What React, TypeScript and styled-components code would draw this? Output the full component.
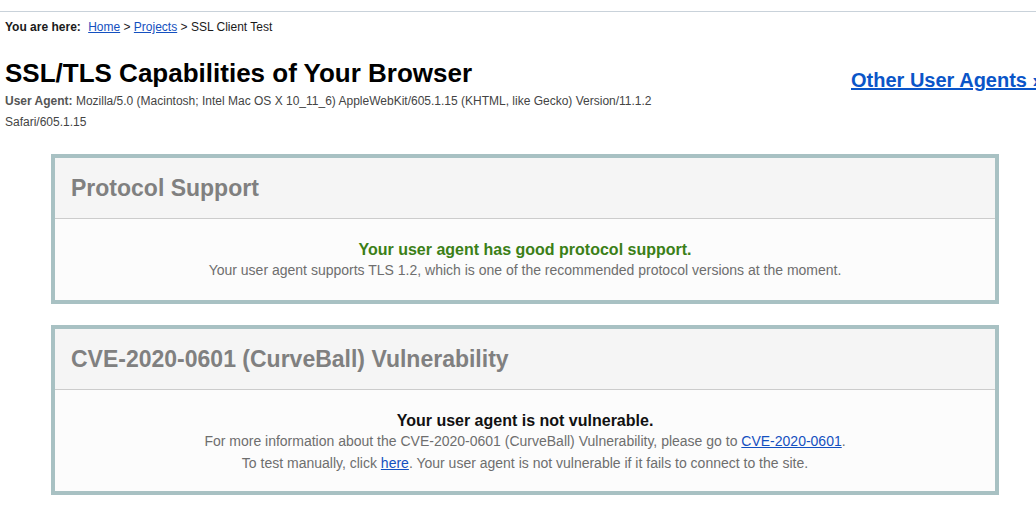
import React from 'react';
import styled, { createGlobalStyle } from 'styled-components';

const GlobalStyle = createGlobalStyle`
  html, body {
    margin: 0;
    padding: 0;
    background: #ffffff;
    overflow: hidden;
  }
  body {
    font-family: "Liberation Sans", Arial, Helvetica, sans-serif;
    color: #111111;
  }
  a {
    color: #1450c0;
  }
`;

const Page = styled.div`
  width: 1080px;
  padding-top: 11px;
`;

const TopRule = styled.div`
  height: 1px;
  background: #c9d2da;
`;

const Breadcrumb = styled.div`
  margin: 7px 0 0 5px;
  font-size: 12px;
  line-height: 16px;
  color: #1a1a1a;

  b {
    margin-right: 4px;
  }
`;

const HeaderRow = styled.div`
  display: flex;
  margin-top: 23px;
`;

const TitleBlock = styled.div`
  width: 851px;
  padding-left: 5px;
  box-sizing: border-box;
`;

const Title = styled.h1`
  margin: 0;
  font-size: 26px;
  line-height: 30px;
  font-weight: bold;
  color: #000000;
`;

const Agent = styled.div`
  width: 670px;
  margin-top: 3px;
  font-size: 12px;
  line-height: 21px;
  color: #444444;

  b {
    color: #555555;
  }
`;

const OtherLink = styled.a`
  padding-top: 10px;
  font-size: 20px;
  line-height: 24px;
  font-weight: bold;
  white-space: nowrap;
  color: #0a55c8;
`;

const Panels = styled.div`
  display: flex;
  flex-direction: column;
  gap: 21px;
  width: 948px;
  margin: 21px 0 0 51px;
`;

const Panel = styled.section`
  border: 4px solid #a8c1c3;
  background: #fcfcfc;
`;

const PanelHead = styled.div`
  height: 60px;
  display: flex;
  align-items: center;
  padding-left: 16px;
  background: #f5f5f5;
  border-bottom: 1px solid #cccccc;
`;

const PanelTitle = styled.h2`
  margin: 0;
  font-size: 23px;
  font-weight: bold;
  color: #808080;
`;

const PanelBody = styled.div<{ $bottom: number }>`
  padding: 21px 0 ${p => p.$bottom}px;
  text-align: center;
`;

const Verdict = styled.div<{ $color: string }>`
  font-size: 16px;
  line-height: 20px;
  font-weight: bold;
  color: ${p => p.$color};
`;

const Note = styled.div<{ $gap?: number }>`
  margin-top: ${p => p.$gap || 0}px;
  font-size: 14px;
  line-height: 20px;
  color: #6e6e6e;
`;

const App = () => {
  return (
    <Page>
      <GlobalStyle />
      <TopRule />
      <Breadcrumb>
        <b>You are here:</b> <a href="#">Home</a> &gt; <a href="#">Projects</a> &gt; SSL Client Test
      </Breadcrumb>
      <HeaderRow>
        <TitleBlock>
          <Title>SSL/TLS Capabilities of Your Browser</Title>
          <Agent>
            <b>User Agent:</b> Mozilla/5.0 (Macintosh; Intel Mac OS X 10_11_6) AppleWebKit/605.1.15 (KHTML, like Gecko) Version/11.1.2 Safari/605.1.15
          </Agent>
        </TitleBlock>
        <OtherLink href="#">Other User Agents »</OtherLink>
      </HeaderRow>
      <Panels>
        <Panel>
          <PanelHead>
            <PanelTitle>Protocol Support</PanelTitle>
          </PanelHead>
          <PanelBody $bottom={20}>
            <Verdict $color="#3b7f17">Your user agent has good protocol support.</Verdict>
            <Note>Your user agent supports TLS 1.2, which is one of the recommended protocol versions at the moment.</Note>
          </PanelBody>
        </Panel>
        <Panel>
          <PanelHead>
            <PanelTitle>CVE-2020-0601 (CurveBall) Vulnerability</PanelTitle>
          </PanelHead>
          <PanelBody $bottom={18}>
            <Verdict $color="#111111">Your user agent is not vulnerable.</Verdict>
            <Note>
              For more information about the CVE-2020-0601 (CurveBall) Vulnerability, please go to <a href="#">CVE-2020-0601</a>.
            </Note>
            <Note $gap={2}>
              To test manually, click <a href="#">here</a>. Your user agent is not vulnerable if it fails to connect to the site.
            </Note>
          </PanelBody>
        </Panel>
      </Panels>
    </Page>
  );
};

export default App;
